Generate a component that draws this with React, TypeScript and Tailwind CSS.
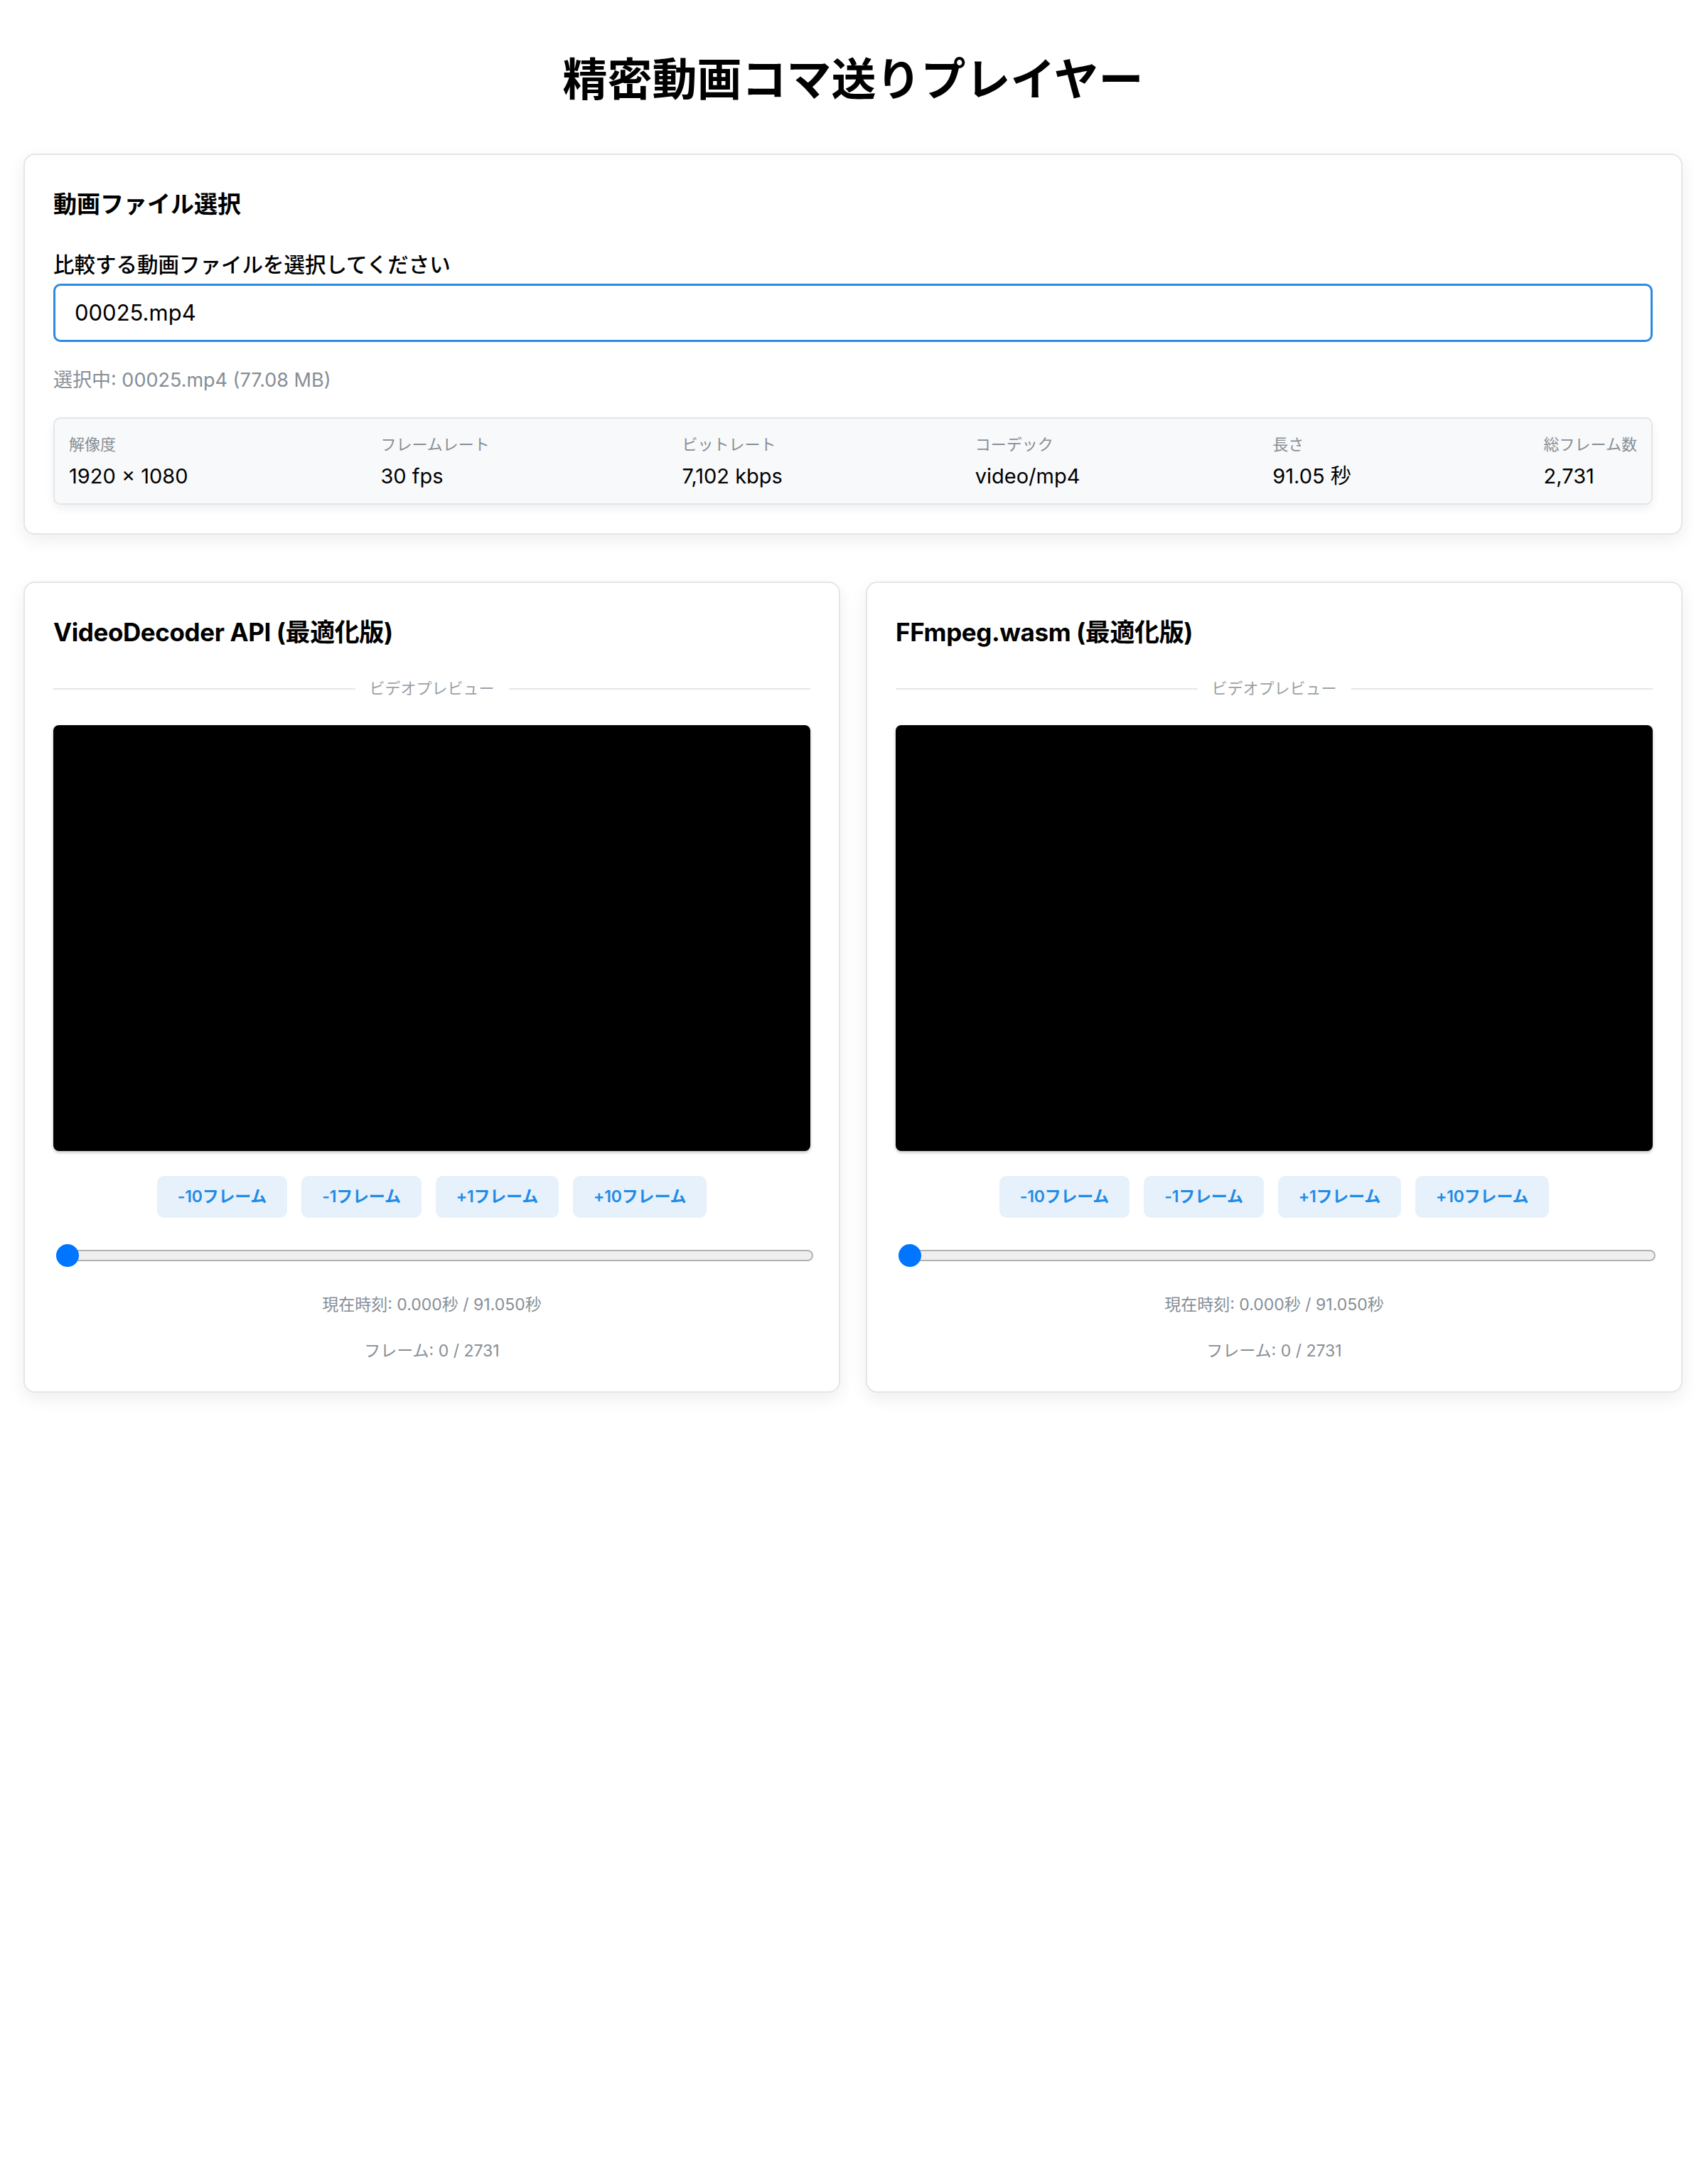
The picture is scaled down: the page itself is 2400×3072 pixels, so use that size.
import React from "react";

const stats = [
  { label: "解像度", value: "1920 × 1080" },
  { label: "フレームレート", value: "30 fps" },
  { label: "ビットレート", value: "7,102 kbps" },
  { label: "コーデック", value: "video/mp4" },
  { label: "長さ", value: "91.05 秒" },
  { label: "総フレーム数", value: "2,731" },
];

const steps = ["-10フレーム", "-1フレーム", "+1フレーム", "+10フレーム"];

const PlayerCard: React.FC<{ title: string }> = ({ title }) => {
  return (
    <div className="bg-white border-2 border-[#e3e6e9] rounded-[16px] shadow-[0_8px_24px_rgba(0,0,0,0.07)] px-[40px] pt-[40px] pb-[40px]">
      <h2 className="text-[35px] leading-[58px] font-bold tracking-[-0.4px] text-black">{title}</h2>

      {/* divider */}
      <div className="mt-[34px] flex items-center gap-[20px]">
        <div className="flex-1 h-[2px] bg-[#e3e6e9]" />
        <span className="text-[22px] leading-[33px] text-[#9aa1a8]">ビデオプレビュー</span>
        <div className="flex-1 h-[2px] bg-[#e3e6e9]" />
      </div>

      {/* video */}
      <div className="mt-[35px] w-full aspect-video bg-black rounded-[8px] shadow-[0_2px_4px_rgba(0,0,0,0.25)]" />

      {/* frame step buttons */}
      <div className="mt-[35px] flex justify-center gap-[20px]">
        {steps.map((s) => (
          <button
            key={s}
            className="h-[59px] px-[29px] rounded-[10px] bg-[#e7f1fb] text-[#228be6] text-[23px] font-semibold tracking-[-0.2px]"
          >
            {s}
          </button>
        ))}
      </div>

      {/* seek bar */}
      <div className="mt-[37px] ml-[4px] w-full h-[32px] relative flex items-center">
        <div className="w-full h-[16px] rounded-full border-2 border-[#b2b2b2] bg-[#efefef]" />
        <div className="absolute left-0 top-0 w-[32px] h-[32px] rounded-full bg-[#0075ff]" />
      </div>

      <p className="mt-[36px] text-center text-[23px] leading-[34px] text-[#868e96]">
        現在時刻: 0.000秒 / 91.050秒
      </p>
      <p className="mt-[31px] text-center text-[23px] leading-[34px] text-[#868e96]">
        フレーム: 0 / 2731
      </p>
    </div>
  );
};

export default function App() {
  return (
    <div
      className="min-h-screen bg-white px-[33px] pt-[73px] pb-[60px] text-black"
      style={{ fontFamily: 'Inter, "Noto Sans CJK JP", "Noto Sans", sans-serif' }}
    >
      <h1 className="text-center text-[63px] leading-[76px] font-bold mb-[67px]">
        精密動画コマ送りプレイヤー
      </h1>

      {/* file selection */}
      <div className="bg-white border-2 border-[#e3e6e9] rounded-[16px] shadow-[0_8px_24px_rgba(0,0,0,0.07)] px-[40px] pt-[40px] pb-[40px]">
        <h2 className="text-[33px] leading-[58px] font-bold">動画ファイル選択</h2>
        <label className="block mt-[36px] text-[29.5px] leading-[40px] font-medium">
          比較する動画ファイルを選択してください
        </label>
        <div className="mt-[7px] h-[82px] flex items-center px-[27px] border-[3px] border-[#2c8ae0] rounded-[10px] text-[31px]">
          00025.mp4
        </div>
        <p className="mt-[34px] text-[27px] leading-[40px] text-[#868e96]">
          選択中: 00025.mp4 (77.08 MB)
        </p>

        <div className="mt-[32px] flex justify-between bg-[#f8f9fa] border-2 border-[#e3e6e9] rounded-[10px] shadow-[0_6px_14px_rgba(0,0,0,0.06)] px-[20px] pt-[20px] pb-[20px]">
          {stats.map((s) => (
            <div key={s.label} className="flex flex-col">
              <span className="text-[22px] leading-[33px] text-[#868e96]">{s.label}</span>
              <span className="mt-[10px] text-[29px] leading-[36px]">{s.value}</span>
            </div>
          ))}
        </div>
      </div>

      <div className="mt-[66px] grid grid-cols-2 gap-[36px]">
        <PlayerCard title="VideoDecoder API (最適化版)" />
        <PlayerCard title="FFmpeg.wasm (最適化版)" />
      </div>
    </div>
  );
}
